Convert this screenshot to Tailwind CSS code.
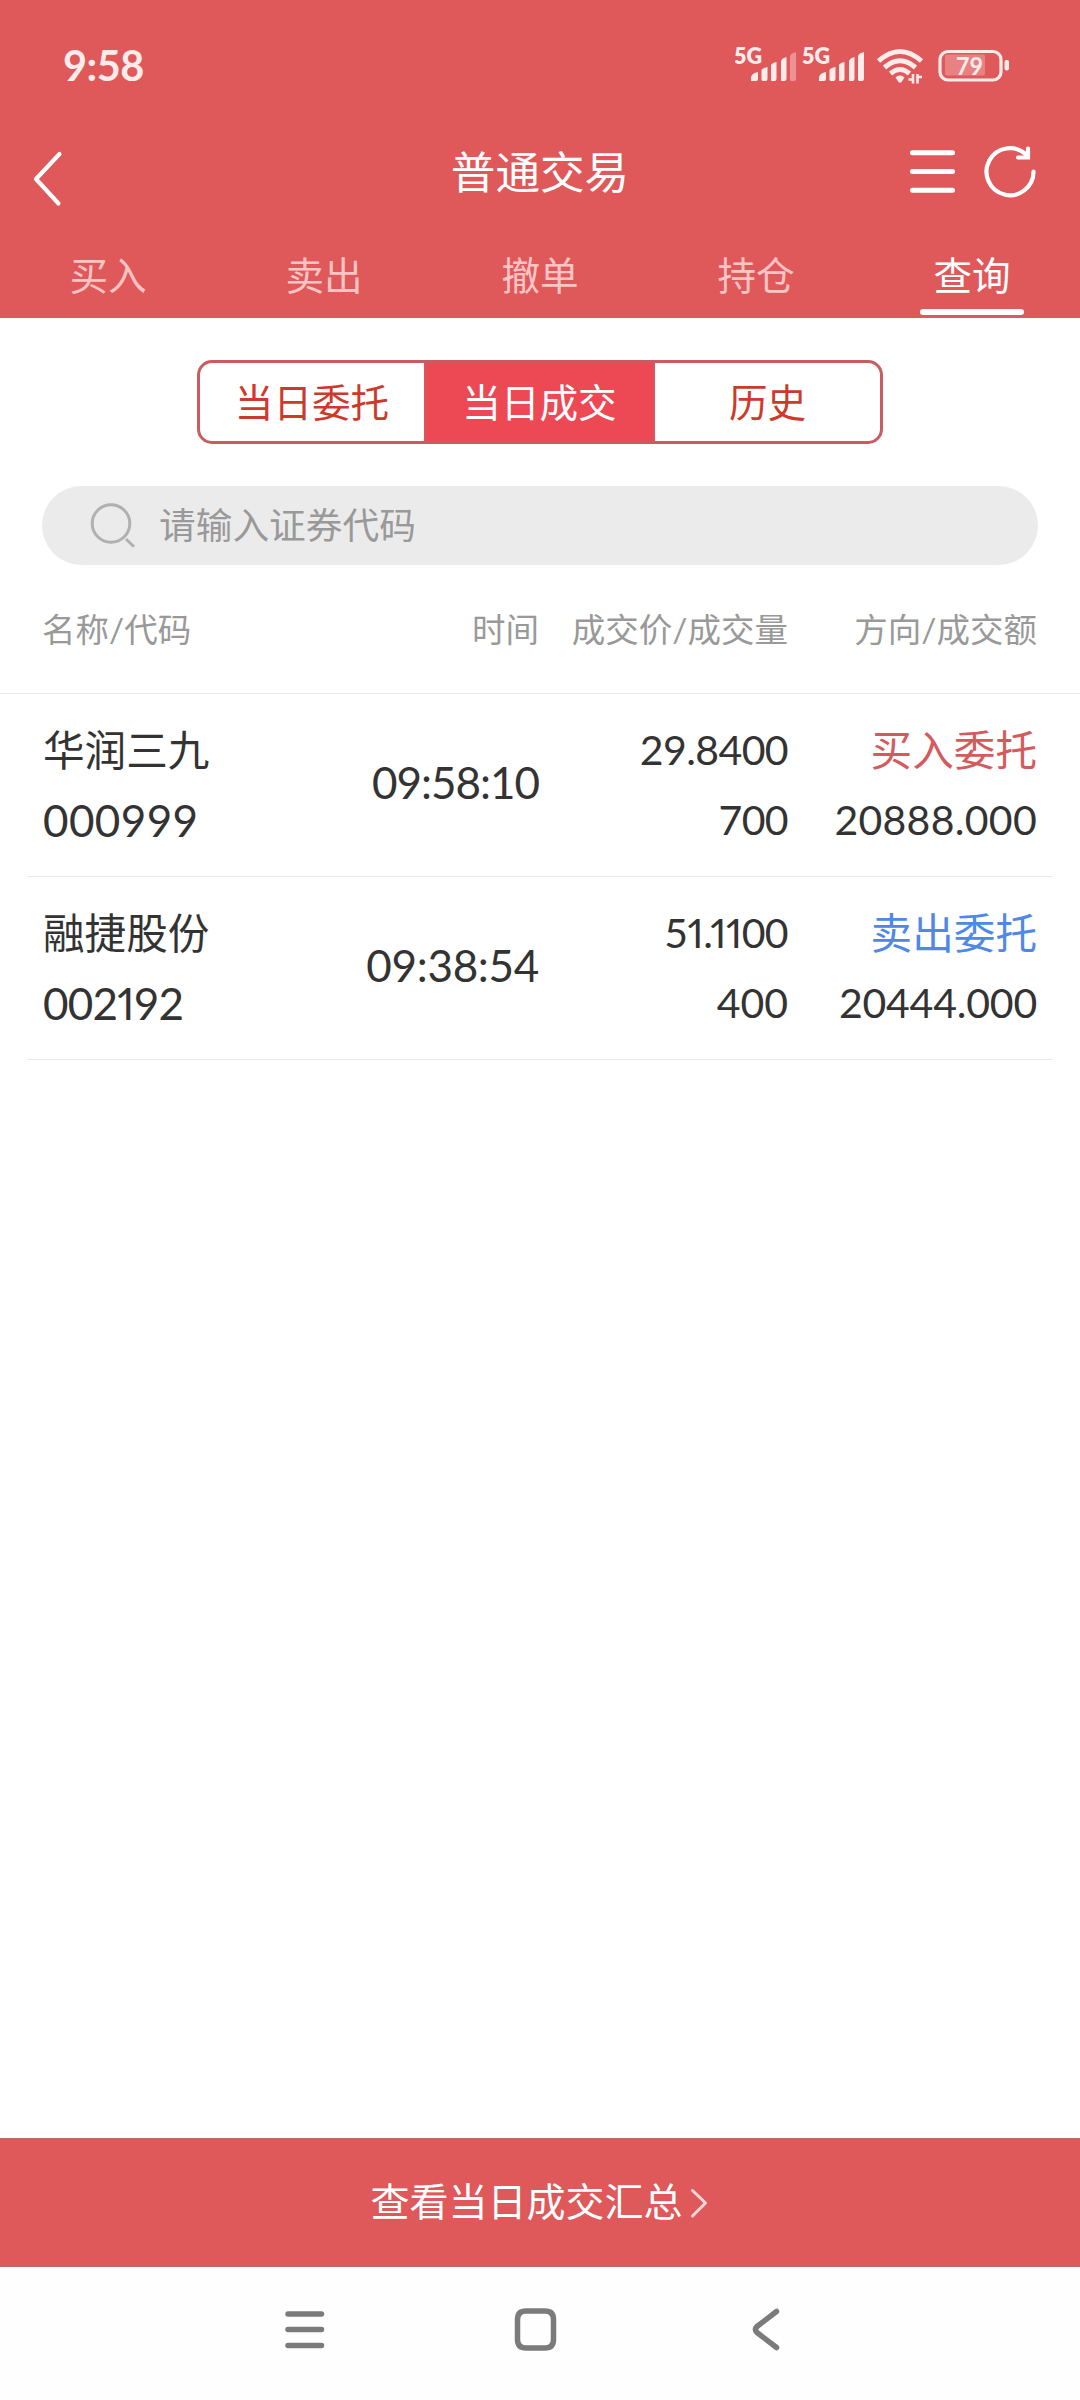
<!DOCTYPE html>
<html lang="zh-CN">
<head>
<meta charset="UTF-8" />
<title>普通交易</title>
<script src="https://cdn.jsdelivr.net/npm/@tailwindcss/browser@4"></script>
</head>
<body class="bg-white font-['Lato','Noto_Sans_CJK_SC',sans-serif] text-[#333]">
<div class="w-[1080px] h-[2400px] flex flex-col overflow-hidden">

  <header class="bg-[#df585a] text-white h-[318px] shrink-0 flex flex-col">
    <!-- status bar -->
    <div class="h-[132px] shrink-0 pl-[63px] flex items-center justify-between text-[#ffecea]">
      <span class="text-[41.500px] leading-none font-bold tracking-[-0.5px]">9:58</span>
      <svg class="w-[345px] h-[60px]" viewBox="735 36 345 60" fill="currentColor">
        <text x="734" y="63.5" font-size="22" font-weight="800" textLength="28" lengthAdjust="spacingAndGlyphs">5G</text>
        <path d="M751 81v-4q1-4 7-5v7q0 2-2 2zM761.500 80v-10q1-2 6-3v12q0 2-2 2h-3zM771 80v-15q1-2 5.500-3v17q0 2-2 2h-3zM781 80v-19q1-3 5.500-4v22q0 2-2 2h-3z" />
        <path d="M790 80v-24q1-3 6-4v27q0 2-2 2h-3z" opacity=".4" />
        <text x="802" y="63.5" font-size="22" font-weight="800" textLength="28" lengthAdjust="spacingAndGlyphs">5G</text>
        <path d="M819 81v-4q1-4 7-5v7q0 2-2 2zM829.500 80v-10q1-2 6-3v12q0 2-2 2h-3zM839 80v-15q1-2 5.500-3v17q0 2-2 2h-3zM849 80v-19q1-3 5.500-4v22q0 2-2 2h-3zM858 80v-24q1-3 6-4v27q0 2-2 2h-3z" />
        <g fill="none" stroke="currentColor" stroke-width="5">
          <path d="M878.500 61Q900 42 921.500 61" />
          <path d="M884.500 67.500Q900 54 915.500 67.500" />
          <path d="M890.500 73.500Q900 65.500 909.500 73.500" />
        </g>
        <path d="M900 75.500q3 0 4.500 2l-3 4.500q-1.500 1.500-3 0l-3-4.500q1.500-2 4.500-2z" />
        <path d="M908.500 79.500h4.500V74M913 74v9.500M917.500 74v9.500M917.500 77h4.500" fill="none" stroke="currentColor" stroke-width="2.600" />
        <rect x="940" y="51.500" width="61" height="28.500" rx="8" fill="none" stroke="currentColor" stroke-width="3.200" />
        <rect x="945" y="54.500" width="40" height="21" rx="2" opacity=".28" />
        <text x="956" y="75" font-size="25.500" font-weight="700" textLength="27" lengthAdjust="spacingAndGlyphs">79</text>
        <rect x="1004.500" y="60" width="4.500" height="10.500" rx="2" />
      </svg>
    </div>

    <!-- title bar -->
    <div class="h-[80px] shrink-0 flex items-center justify-between">
      <svg class="w-[180px] h-[80px]" viewBox="0 132 180 80" fill="none" stroke="currentColor" stroke-width="4.200" stroke-linecap="round" stroke-linejoin="round">
        <path d="M59.500 154L36 179L58.500 203.500" />
      </svg>
      <h1 class="text-[44.600px] leading-[80px]">普通交易</h1>
      <svg class="w-[180px] h-[80px]" viewBox="900 132 180 80" fill="none" stroke="currentColor" stroke-width="4.200" stroke-linecap="round">
        <path d="M912.500 152.700h40M912.500 171.500h40M912.500 190.300h40" stroke-width="5" />
        <path d="M1033.500 171.500A23.500 23.500 0 1 1 1026 154.500" />
        <path d="M1028 148.500v9h-10" />
      </svg>
    </div>

    <nav class="h-[106px] shrink-0 grid grid-cols-5 text-center text-[38.600px] leading-[127px] text-[#ffc4c3]">
      <a>买入</a>
      <a>卖出</a>
      <a>撤单</a>
      <a>持仓</a>
      <a class="text-white flex flex-col items-center">
        <span class="h-[97px]">查询</span>
        <span class="w-[104px] h-[6px] rounded-full bg-white"></span>
      </a>
    </nav>
  </header>

  <main class="grow flex flex-col">
    <div class="mt-[42px] mx-auto w-[686px] h-[84px] shrink-0 flex rounded-[15px] border-3 border-[#c85c60] overflow-hidden text-center text-[38.600px] leading-[78px] text-[#cd3a2c]">
      <span class="w-[224px]">当日委托</span>
      <span class="w-[231px] bg-[#ec4954] border-x-2 border-[#d9565c] text-white">当日成交</span>
      <span class="grow">历史</span>
    </div>

    <div class="mt-[42px] mx-[42px] h-[79px] shrink-0 rounded-full bg-[#ebebeb] flex items-center text-[#999]">
      <svg class="ml-[46px] w-[50px] h-[50px]" viewBox="88 500 50 50" fill="none" stroke="#b0b0b0" stroke-width="3">
        <circle cx="111" cy="522.500" r="18.800" />
        <path d="M126 538l8 7.800" />
      </svg>
      <span class="ml-[21px] -mt-[2px] text-[36.700px] leading-[76px]">请输入证券代码</span>
    </div>

    <div class="h-[129px] shrink-0 px-[42px] border-b border-[#e8e8e8] grid grid-cols-[497px_249px_249px] text-right text-[33.500px] leading-[129px] text-[#999]">
      <div class="flex justify-between"><span>名称/代码</span><span>时间</span></div>
      <span>成交价/成交量</span>
      <span>方向/成交额</span>
    </div>

    <div class="h-[183px] shrink-0 mx-[28px] px-[15px] border-b border-[#e8e8e8] grid grid-cols-[248px_248px_249px_249px] text-right text-[41px] leading-[70px] pt-[21px]">
      <div class="text-left">
        <p class="text-[41.600px]">华润三九</p>
        <p class="text-[44px] tracking-[0.4px]">000999</p>
      </div>
      <p class="text-[44px] leading-[134px] tracking-[-1px]">09:58:10</p>
      <div>
        <p class="tracking-[-0.6px]">29.8400</p>
        <p class="tracking-[-0.6px]">700</p>
      </div>
      <div>
        <p class="text-[41.600px] text-[#d55a5c]">买入委托</p>
        <p class="tracking-[0.3px]">20888.000</p>
      </div>
    </div>

    <div class="h-[183px] shrink-0 mx-[28px] px-[15px] border-b border-[#e8e8e8] grid grid-cols-[248px_248px_249px_249px] text-right text-[41px] leading-[70px] pt-[21px]">
      <div class="text-left">
        <p class="text-[41.600px]">融捷股份</p>
        <p class="text-[44px] tracking-[-0.8px]">002<span class="proportional-nums">1</span>92</p>
      </div>
      <p class="text-[44px] leading-[134px] tracking-[-0.3px]">09:38:54</p>
      <div>
        <p class="tracking-[-0.6px]">5<span class="proportional-nums">1.11</span>00</p>
        <p>400</p>
      </div>
      <div>
        <p class="text-[41.600px] text-[#4f88e6]">卖出委托</p>
        <p class="tracking-[-0.2px]">20444.000</p>
      </div>
    </div>
  </main>

  <button class="h-[129px] shrink-0 bg-[#df585a] border-y border-[#bf6668] text-white flex items-center justify-center gap-[7px]">
    <span class="text-[39px] leading-[124px] -mt-[3px] -ml-[2px]">查看当日成交汇总</span>
    <svg class="w-[18px] h-[32px]" viewBox="690 2187 18 32" fill="none" stroke="#ffd9d9" stroke-width="3" stroke-linecap="round" stroke-linejoin="round">
      <path d="M692.500 2190.500L705.500 2203L692.500 2216" />
    </svg>
  </button>

  <!-- system navigation -->
  <div class="h-[133px] shrink-0 bg-[#fefefe]">
    <svg class="w-[1080px] h-[133px]" viewBox="0 2267 1080 133" fill="none" stroke="#7b7b7b" stroke-width="5.500" stroke-linecap="round" stroke-linejoin="round">
      <path d="M288 2314h33.500M288 2329.500h33.500M288 2345.500h33.500" />
      <path d="M526 2311h19q8.500 0 8.500 8.500v20q0 8.500-8.500 8.500h-19q-8.500 0-8.500-8.500v-20q0-8.500 8.500-8.500z" />
      <path d="M776.500 2311.500L757 2326.500q-3 3 0 6L776.500 2347.500" />
    </svg>
  </div>

</div>
</body>
</html>
